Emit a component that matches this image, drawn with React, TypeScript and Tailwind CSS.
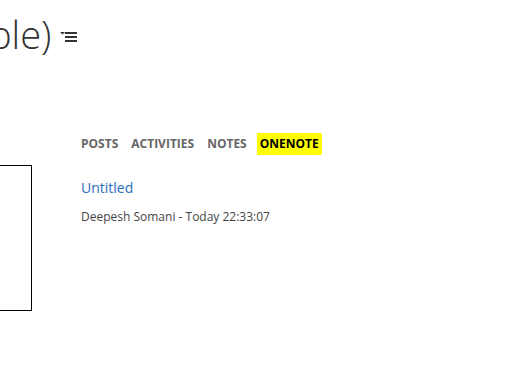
import React from "react";

const tabs = ["POSTS", "ACTIVITIES", "NOTES", "ONENOTE"];

const ListIcon = () => (
  <svg width="17" height="13" viewBox="0 0 17 13" className="mt-[23px] ml-[9px]">
    <path d="M0 1h5l-2.5 2.5z" fill="#333" />
    <rect x="5" y="1" width="12" height="2" fill="#333" />
    <rect x="5" y="5" width="12" height="2" fill="#333" />
    <rect x="5" y="9" width="12" height="2" fill="#333" />
  </svg>
);

export default function App() {
  return (
    <div
      className="w-[515px] h-[385px] overflow-hidden bg-white"
      style={{ fontFamily: '"Open Sans", "Noto Sans", sans-serif' }}
    >
      {/* header */}
      <div className="flex items-start pt-[8px]">
        <h1 className="-ml-[11px] text-[38px] leading-[52px] font-light text-[#333]">ple)</h1>
        <ListIcon />
      </div>

      <div className="flex mt-[73px]">
        {/* left panel, cut off at the window edge */}
        <div className="mt-[32px] w-[32px] h-[146px] border-t border-r border-b border-black" />

        <div className="ml-[49px] flex flex-col">
          <div className="flex items-center gap-[13px] text-[12px] font-bold">
            {tabs.map((t) => (
              <span
                key={t}
                className={
                  t === "ONENOTE"
                    ? "bg-[#ffff00] text-black px-[3px] py-[2px] -ml-[3px]"
                    : "text-[#666] py-[2px]"
                }
              >
                {t}
              </span>
            ))}
          </div>
          <a className="mt-[23px] text-[14px] text-[#2a6ebb] leading-[20px]">Untitled</a>
          <p className="mt-[11px] text-[12px] text-[#444] leading-[16px]">
            Deepesh Somani - Today 22:33:07
          </p>
        </div>
      </div>
    </div>
  );
}
